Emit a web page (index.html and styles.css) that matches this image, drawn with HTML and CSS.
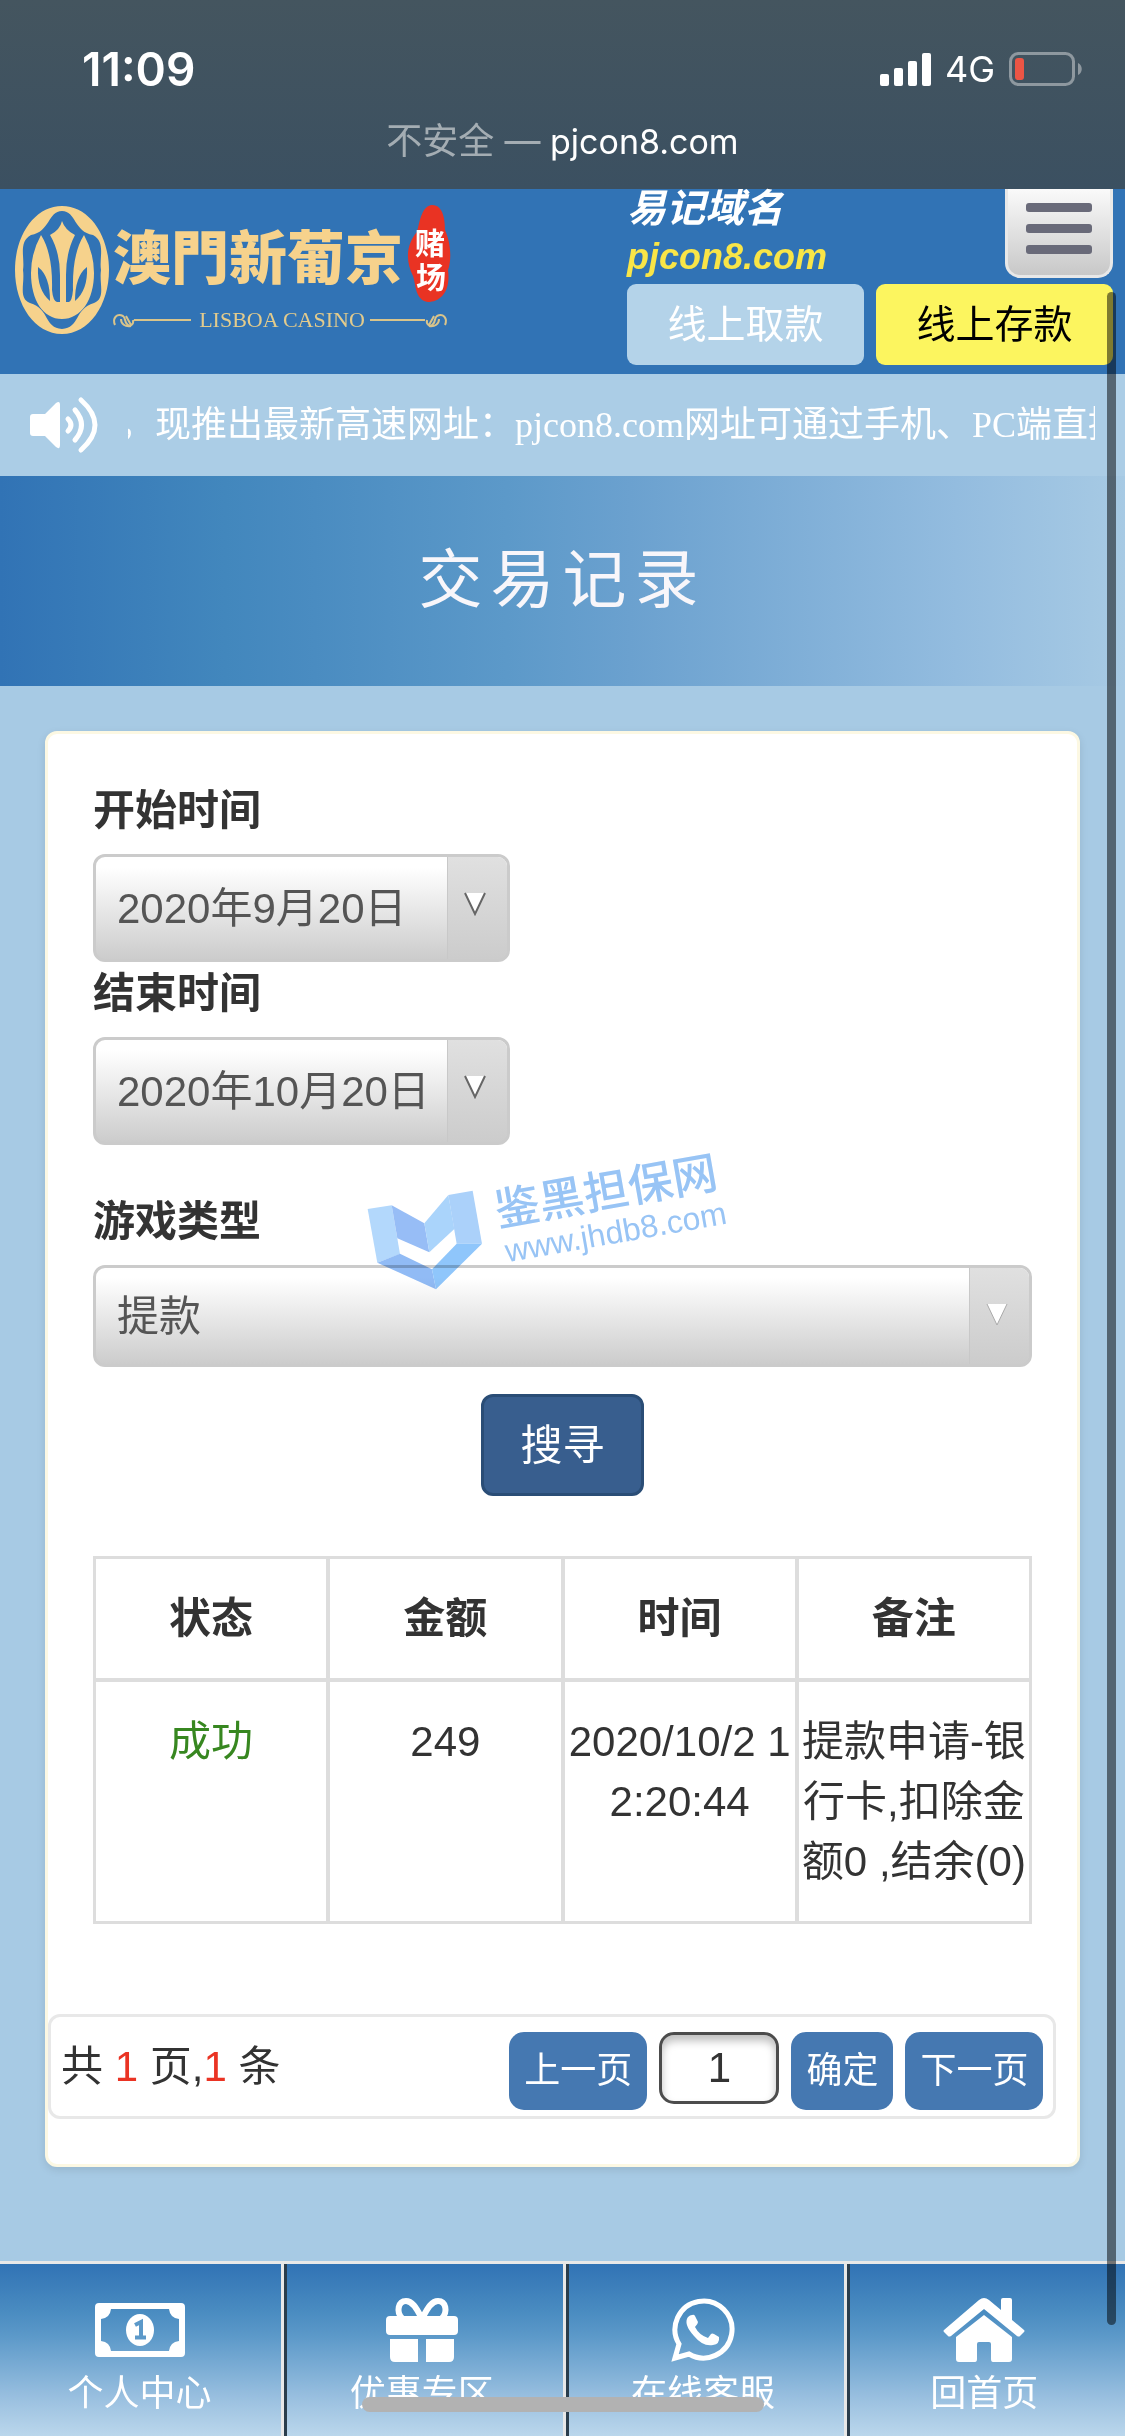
FILE: index.html
```html
<!DOCTYPE html>
<html lang="zh-CN">
<head>
    <meta charset="UTF-8">
    <meta name="viewport" content="width=device-width, initial-scale=1.0">
    <title>交易记录</title>
    <link rel="stylesheet" href="styles.css">
</head>
<body>
    <!-- Status bar -->
    <div class="status">
        <div class="status-row">
            <span class="clock">11:09</span>
            <div class="signal">
                <svg width="51" height="33" viewBox="0 0 51 33" fill="#fff">
                    <rect x="0" y="21" width="9" height="12" rx="2"/>
                    <rect x="14" y="15" width="9" height="18" rx="2"/>
                    <rect x="28" y="8" width="9" height="25" rx="2"/>
                    <rect x="42" y="0" width="9" height="33" rx="2"/>
                </svg>
                <span>4G</span>
                <svg width="74" height="34" viewBox="0 0 74 34">
                    <rect x="1.5" y="1.5" width="63" height="31" rx="8" fill="none" stroke="#8e989f" stroke-width="3"/>
                    <rect x="6" y="6" width="9" height="22" rx="3" fill="#eb5545"/>
                    <path d="M69 11c5 2 5 10 0 12z" fill="#8e989f"/>
                </svg>
            </div>
        </div>
        <p class="address"><span>不安全 —</span> pjcon8.com</p>
    </div>

    <header class="header">
        <a class="logo" href="#" aria-label="澳門新葡京">
            <svg width="444" height="138" viewBox="12 200 444 138">
                <path fill="#f6d28c" fill-rule="evenodd" d="M62 206C89 206 109 235 109 270S89 334 62 334 15 305 15 270 35 206 62 206zM62 211C76 211 74 232 93 235 106 242 99 258 101 270 99 284 106 298 94 303 74 309 80 328 62 329 44 328 50 309 30 303 18 298 25 284 23 270 25 258 18 242 31 235 50 232 48 211 62 211z"/>
                <path fill="#f6d28c" d="M62 221Q65 230 75 235 66 252 66 275V302H69Q72 301 73 290 72 254 84 235 94 253 94 273C94 300 81 319 62 319S31 300 31 273Q31 253 41 235 53 254 52 290 53 301 57 302H60V275Q60 252 50 235 60 230 62 221z"/>
                <path fill="#3173b5" d="M38 267Q37 290 50 301 50 276 38 267zM87 267Q88 290 75 301 75 276 87 267z"/>
                <text class="logo-name" x="113" y="279">澳門新葡京</text>
                <path fill="#e93323" d="M432 205C444 205 445 222 445 230 452 246 451 262 448 270 451 292 440 302 428 302 415 300 416 285 413 276 404 258 408 242 417 232 420 220 422 206 432 205z"/>
                <text class="logo-seal" x="415" y="254">赌</text>
                <text class="logo-seal" x="416" y="288">场</text>
                <g fill="none" stroke="#d9c48b" stroke-width="2">
                    <path d="M134 320H191M370 320H425"/>
                    <path d="M115 325c-3-7 2-12 8-9 3 2 1 5 4 8 3 4 7 0 6-4M121 319c0 5 4 8 10 7M126 316l5 9"/>
                    <path d="M445 325c3-7-2-12-8-9-3 2-1 5-4 8-3 4-7 0-6-4M439 319c0 5-4 8-10 7M434 316l-5 9"/>
                </g>
                <text class="logo-sub" x="282" y="327" text-anchor="middle">LISBOA CASINO</text>
            </svg>
        </a>
        <div class="header-right">
            <div class="header-top">
                <div class="domain">
                    <p class="domain-label">易记域名</p>
                    <p class="domain-name">pjcon8.com</p>
                </div>
                <button class="menu" type="button" aria-label="菜单">
                    <span></span>
                    <span></span>
                    <span></span>
                </button>
            </div>
            <div class="header-buttons">
                <button class="withdraw" type="button">线上取款</button>
                <button class="deposit" type="button">线上存款</button>
            </div>
        </div>
    </header>

    <!-- Notice -->
    <div class="notice">
        <svg width="68" height="62" viewBox="0 0 68 62">
            <path d="M3 20H15L26 9Q30 6 30 11V51Q30 56 26 53L15 42H3Q0 42 0 39V23Q0 20 3 20z" fill="#fff"/>
            <path d="M38 25Q44 31 38 37M45 16Q58 31 45 46M51 6Q79 31 51 56" fill="none" stroke="#fff" stroke-width="5" stroke-linecap="round"/>
        </svg>
        <p class="notice-text">，现推出最新高速网址：pjcon8.com网址可通过手机、PC端直接</p>
    </div>

    <h1 class="title">交易记录</h1>

    <main class="main">
        <div class="card">
            <form class="search">
                <label for="startDate">开始时间</label>
                <div class="field date">
                    <input type="text" id="startDate" value="2020年9月20日">
                    <span class="arrow"><svg width="22" height="24" viewBox="0 0 22 24"><path d="M1 1 11 22 21 1" fill="#fff" stroke="#666" stroke-width="2"/></svg></span>
                </div>
                <label for="endDate">结束时间</label>
                <div class="field date">
                    <input type="text" id="endDate" value="2020年10月20日">
                    <span class="arrow"><svg width="22" height="24" viewBox="0 0 22 24"><path d="M1 1 11 22 21 1" fill="#fff" stroke="#666" stroke-width="2"/></svg></span>
                </div>
                <label class="type-label" for="type">游戏类型</label>
                <div class="field type">
                    <select id="type">
                        <option>提款</option>
                    </select>
                    <span class="arrow"><svg width="22" height="24" viewBox="0 0 22 24"><path d="M1 1 11 22 21 1" fill="#fff" stroke="#aaa"/></svg></span>
                </div>
                <button class="submit" type="button">搜寻</button>
            </form>

            <table class="records">
                <thead>
                    <tr>
                        <th>状态</th>
                        <th>金额</th>
                        <th>时间</th>
                        <th>备注</th>
                    </tr>
                </thead>
                <tbody>
                    <tr>
                        <td class="success">成功</td>
                        <td>249</td>
                        <td>2020/10/2 12:20:44</td>
                        <td>提款申请-银行卡,扣除金额0 ,结余(0)</td>
                    </tr>
                </tbody>
            </table>

            <div class="pager">
                <p>共 <em>1</em> 页,<em>1</em> 条</p>
                <div class="pager-buttons">
                    <button type="button">上一页</button>
                    <input type="text" value="1" aria-label="页码">
                    <button type="button">确定</button>
                    <button type="button">下一页</button>
                </div>
            </div>

            <!-- Watermark -->
            <svg class="watermark" width="420" height="180" viewBox="0 0 420 180">
                <g transform="scale(.3333)">
                    <path fill="#b3d8fc" d="M83 237 155 226 180 372 112 398z"/>
                    <path fill="#97bdf6" d="M155 226 253 280 268 367 172 325z"/>
                    <path fill="#aad4fb" d="M253 280 325 195 343 297 268 367z"/>
                    <path fill="#abd1fa" d="M325 195 398 182 426 341 350 341z"/>
                    <path fill="#91bbf5" d="M112 398 180 371 276 418 288 478z"/>
                    <path fill="#8fc6fb" d="M276 418 350 341 426 341 288 478z"/>
                </g>
                <g fill="#98c4f5" transform="rotate(-10 166 96)">
                    <text class="mark-name" x="158" y="95">鉴黑担保网</text>
                    <text class="mark-url" x="161" y="132">www.jhdb8.com</text>
                </g>
            </svg>
        </div>
    </main>

    <nav class="tabs">
        <a href="#">
            <svg width="90" height="64" viewBox="0 0 90 64">
                <path fill="#fff" fill-rule="evenodd" d="M4 5H86Q90 5 90 9V55Q90 59 86 59H4Q0 59 0 55V9Q0 5 4 5zM16 11Q15 20 6 21V43Q15 44 16 53H74Q75 44 84 43V21Q75 20 74 11z"/>
                <ellipse cx="45" cy="32" rx="14" ry="16" fill="#fff"/>
                <path d="M40 27 46 24V39M40 39.500H51" fill="none" stroke="#5c99c9" stroke-width="4"/>
            </svg>
            <span>个人中心</span>
        </a>
        <a href="#">
            <svg width="72" height="64" viewBox="0 0 72 64">
                <path d="M35 19C30 9 26 3 20 3 12 3 10 14 16 20M37 19C42 9 46 3 52 3 60 3 62 14 56 20" fill="none" stroke="#fff" stroke-width="6"/>
                <path fill="#fff" d="M4 18H68Q72 18 72 22V33Q72 37 68 37H4Q0 37 0 33V22Q0 18 4 18zM4 41H32V64H9Q4 64 4 59zM40 41H68V59Q68 64 63 64H40z"/>
            </svg>
            <span>优惠专区</span>
        </a>
        <a href="#">
            <svg width="64" height="64" viewBox="0 0 64 64">
                <path d="M4 60 8 46A28.500 28.500 0 1 1 18 56z" fill="none" stroke="#fff" stroke-width="5"/>
                <path fill="#fff" d="M21 17Q23 16 24 18L27 24Q27 26 24 29 28 37 37 40L40 36Q41 35 43 36L48 39Q49 46 42 47 32 49 23 38 12 26 17 19 19 17 21 17z"/>
            </svg>
            <span>在线客服</span>
        </a>
        <a href="#">
            <svg width="82" height="64" viewBox="0 0 82 64">
                <path fill="#fff" d="M36 2Q41-2 46 2L58 12V2Q58 0 60 0H67Q69 0 69 2V22L81 32Q82 33 81 34L77 38Q76 39 74 38L41 11 8 38Q6 39 5 38L1 34Q0 33 1 32z"/>
                <path fill="#fff" d="M41 17 69 39V61Q69 64 66 64H50Q48 64 48 61V46Q48 44 46 44H36Q34 44 34 46V61Q34 64 32 64H16Q13 64 13 61V39z"/>
            </svg>
            <span>回首页</span>
        </a>
    </nav>

    <div class="scrollbar"></div>
    <div class="home-indicator"></div>
</body>
</html>
```
FILE: styles.css
```css
/* Reset */
* {
    margin: 0;
    padding: 0;
    box-sizing: border-box;
}

body {
    display: flex;
    flex-direction: column;
    min-height: 100vh;
    position: relative;
    font-family: "Liberation Sans", "Noto Sans CJK SC", sans-serif;
    font-size: 42px;
    line-height: 60px;
    color: #333;
    background-color: #a7cae4;
}

button,
input,
select {
    font: inherit;
    border: none;
}

svg {
    display: block;
    flex: none;
}

a {
    text-decoration: none;
}

/* Status bar */
.status {
    height: 189px;
    padding: 42px 42px 0 82px;
    color: #fff;
    font-family: Inter, "Noto Sans CJK SC", sans-serif;
    background: linear-gradient(#44555f, #3b5061);
}

.status-row {
    display: flex;
    justify-content: space-between;
    align-items: center;
    height: 54px;
}

.clock {
    font-size: 46px;
    font-weight: 600;
}

.signal {
    display: flex;
    align-items: center;
    gap: 14px;
    font-size: 36px;
}

.address {
    margin: 18px 0 0 -40px;
    text-align: center;
    font-size: 34px;
    line-height: 54px;
}

.address span {
    color: #a4adb3;
    font-size: 36px;
}

/* Header */
.header {
    display: flex;
    justify-content: space-between;
    height: 185px;
    padding: 0 12px;
    background-color: #3173b5;
}

.logo {
    padding-top: 11px;
}

.logo-name {
    font-size: 58px;
    font-weight: 900;
    fill: #f6d28c;
}

.logo-seal {
    font-size: 30px;
    font-weight: bold;
    fill: #fff;
}

.logo-sub {
    font-family: "Liberation Serif", serif;
    font-size: 22px;
    fill: #e3cb8c;
}

.header-right {
    width: 486px;
}

.header-top {
    display: flex;
    justify-content: space-between;
    height: 95px;
}

.domain {
    font-weight: bold;
    font-style: italic;
}

.domain-label {
    color: #fff;
    font-size: 39px;
    line-height: 39px;
}

.domain-name {
    color: #f9e547;
    font-size: 36px;
    line-height: 57px;
}

.menu {
    display: flex;
    flex-direction: column;
    gap: 12px;
    width: 108px;
    height: 89px;
    padding: 14px 18px 0;
    border: 3px solid #e8e8e8;
    border-top: none;
    border-radius: 0 0 15px 15px;
    background: linear-gradient(#fafafa, #c8c8c8);
}

.menu span {
    height: 9px;
    border-radius: 3px;
    background-color: #696a79;
}

.header-buttons {
    display: flex;
    gap: 12px;
}

.header-buttons button {
    flex: 1;
    height: 81px;
    border-radius: 9px;
    font-size: 39px;
}

.withdraw {
    color: #fff;
    background-color: #b4d3e9;
}

.deposit {
    color: #000;
    background-color: #fcf55f;
}

/* Notice */
.notice {
    display: flex;
    align-items: center;
    gap: 30px;
    height: 102px;
    padding: 0 30px;
    background-color: #abcde6;
}

.notice-text {
    flex: 1;
    overflow: hidden;
    white-space: nowrap;
    text-indent: -9px;
    color: #fff;
    font-family: "Liberation Serif", "Noto Sans CJK SC", serif;
    font-size: 36px;
}

.title {
    height: 210px;
    line-height: 208px;
    text-align: center;
    color: #f8f6fa;
    font-size: 64px;
    font-weight: normal;
    letter-spacing: 8px;
    background: linear-gradient(to right, #3173b5, #4287bd 20%, #4a8cc1 28%, #5c99c9 45%, #6ba1cf 56%, #93bcdf 85%, #a7cae4);
}

/* Card */
.main {
    flex: 1;
    padding: 45px;
}

.card {
    position: relative;
    padding: 45px 0;
    border: 3px solid #fcf8e3;
    border-radius: 12px;
    background-color: #fff;
    box-shadow: 0 3px 9px rgba(0, 0, 0, 0.1);
}

.search {
    display: flex;
    flex-direction: column;
    padding: 0 45px;
}

.search label {
    margin-bottom: 12px;
    line-height: 63px;
    font-weight: bold;
}

.search .type-label {
    margin-top: 45px;
}

.field {
    display: flex;
    overflow: hidden;
    border: 3px solid #cbcbcb;
    border-radius: 12px;
    background: linear-gradient(#fff 10%, #ccc);
}

.field input,
.field select {
    flex: 1;
    min-width: 0;
    padding: 2px 0 0 21px;
    appearance: none;
    outline: none;
    color: #555;
    background: transparent;
}

.date {
    width: 417px;
    height: 108px;
}

.type {
    height: 102px;
}

.arrow {
    display: flex;
    justify-content: center;
    width: 60px;
    padding: 35px 5px 0 0;
    border-left: 1px solid #c8c8c8;
    background: linear-gradient(#e0e0e0, #ccc);
}

.submit {
    align-self: center;
    height: 102px;
    margin-top: 27px;
    padding: 2px 36px 0;
    border: 3px solid #2a4d76;
    border-radius: 12px;
    color: #fff;
    background-color: #385e8e;
}

/* Records */
.records {
    width: calc(100% - 90px);
    margin: 60px 45px 90px;
    table-layout: fixed;
    border: 1px solid #ddd;
    border-spacing: 0;
}

.records th,
.records td {
    padding: 30px 0 29px;
    border: 2px solid #ddd;
    text-align: center;
    vertical-align: top;
    word-break: break-all;
}

.records .success {
    color: #378720;
}

/* Pager */
.pager {
    display: flex;
    justify-content: space-between;
    align-items: center;
    width: 98%;
    height: 105px;
    padding: 0 10px;
    border: 3px solid #e8e8e8;
    border-radius: 12px;
}

.pager em {
    font-style: normal;
    color: #ea3323;
}

.pager-buttons {
    display: flex;
    gap: 12px;
    padding-top: 9px;
}

.pager-buttons button {
    height: 78px;
    padding: 0 15px;
    border-radius: 15px;
    font-size: 36px;
    color: #fff;
    background-color: #4578b1;
}

.pager-buttons input {
    width: 120px;
    height: 72px;
    border: 3px solid #4c4c4c;
    border-radius: 15px;
    text-align: center;
    color: #333;
    box-shadow: inset 0 6px 9px rgba(0, 0, 0, 0.25);
}

/* Watermark */
.watermark {
    position: absolute;
    top: 396px;
    left: calc(50% - 223px);
    mix-blend-mode: multiply;
    pointer-events: none;
}

.mark-name {
    font-size: 45px;
    font-weight: 500;
}

.mark-url {
    font-size: 32px;
}

/* Bottom tabs */
.tabs {
    display: flex;
    height: 175px;
    border-top: 3px solid #e8e8e8;
}

.tabs a {
    display: flex;
    flex-direction: column;
    align-items: center;
    gap: 8px;
    width: 25%;
    padding: 34px 6px 0 0;
    border-left: 3px solid #2a3d4c;
    border-right: 3px solid #e8e8e8;
    color: #fff;
    font-size: 36px;
    line-height: 48px;
    background: linear-gradient(#3173b5, #4a8cc1 28%, #5c99c9 42%, #9dc2e1 80%, #bbd7ec);
}

.tabs a:first-child {
    width: calc(25% + 3px);
    padding-right: 2px;
    border-left: none;
}

.tabs a:last-child {
    flex: 1;
    border-right: none;
}

.scrollbar {
    position: absolute;
    top: 292px;
    right: 9px;
    bottom: 111px;
    width: 9px;
    border-radius: 5px;
    background-color: rgba(0, 0, 0, 0.5);
}

.home-indicator {
    position: absolute;
    bottom: 24px;
    left: 50%;
    width: 402px;
    height: 15px;
    margin-left: -201px;
    border-radius: 8px;
    background-color: #b2b2b2;
}
```
